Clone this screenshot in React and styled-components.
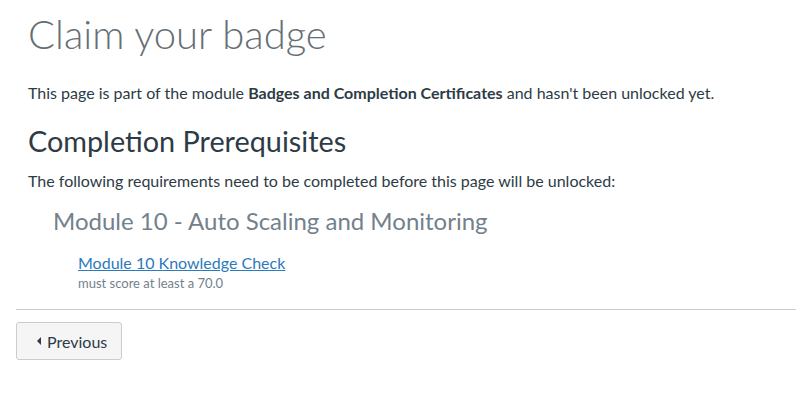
import React from "react";
import styled, { createGlobalStyle } from "styled-components";

const Global = createGlobalStyle`
  body {
    margin: 0;
    background: #fff;
    font-family: Lato, "Noto Sans", sans-serif;
    color: #2d3b45;
  }
`;

const Page = styled.div`
  padding: 0 0 0 16px;
`;

const Content = styled.div`
  padding: 0 12px;
`;

const Title = styled.h1`
  margin: 0;
  padding-top: 10px;
  font-size: 40px;
  font-weight: 300;
  line-height: 48px;
  color: #666f75;
`;

const Text = styled.p`
  margin: ${(p) => p.$margin || "0"};
  font-size: 16px;
  line-height: 24px;
  b {
    font-weight: 700;
  }
`;

const Heading = styled.h2`
  margin: 18px 0 0;
  font-size: 28.8px;
  font-weight: 400;
  line-height: 36px;
  color: #2d3b45;
`;

const Module = styled.div`
  padding-left: 25px;
  margin-top: 12px;
`;

const ModuleName = styled.h3`
  margin: 0;
  font-size: 24px;
  font-weight: 400;
  line-height: 32px;
  color: #73818c;
`;

const Requirement = styled.div`
  padding-left: 25px;
  margin-top: 16px;
`;

const ReqLink = styled.a`
  display: block;
  font-size: 16px;
  line-height: 20px;
  color: #2b7abc;
  text-decoration: underline;
`;

const ReqNote = styled.div`
  margin-top: 1px;
  font-size: 13px;
  line-height: 18px;
  color: #73818c;
`;

const Rule = styled.hr`
  border: 0;
  border-top: 1px solid #c7cdd1;
  margin: 17px 0 12px;
`;

const Button = styled.button`
  display: inline-flex;
  align-items: center;
  gap: 6px;
  height: 38px;
  padding: 0 14px 0 20px;
  background: #f5f5f5;
  border: 1px solid #c7cdd1;
  border-radius: 3px;
  font-family: Lato, "Noto Sans", sans-serif;
  font-size: 16px;
  color: #2d3b45;
`;

const Caret = styled.span`
  width: 0;
  height: 0;
  border-top: 4px solid transparent;
  border-bottom: 4px solid transparent;
  border-right: 4px solid #2d3b45;
`;

export default function App() {
  return (
    <>
      <Global />
      <Page>
        <Content>
          <Title>Claim your badge</Title>
          <Text $margin="23px 0 0">
            This page is part of the module <b>Badges and Completion Certificates</b> and hasn't been unlocked yet.
          </Text>
          <Heading>Completion Prerequisites</Heading>
          <Text $margin="10px 0 0">
            The following requirements need to be completed before this page will be unlocked:
          </Text>
          <Module>
            <ModuleName>Module 10 - Auto Scaling and Monitoring</ModuleName>
            <Requirement>
              <ReqLink href="#">Module 10 Knowledge Check</ReqLink>
              <ReqNote>must score at least a 70.0</ReqNote>
            </Requirement>
          </Module>
        </Content>
        <Rule />
        <Button>
          <Caret />
          Previous
        </Button>
      </Page>
    </>
  );
}
